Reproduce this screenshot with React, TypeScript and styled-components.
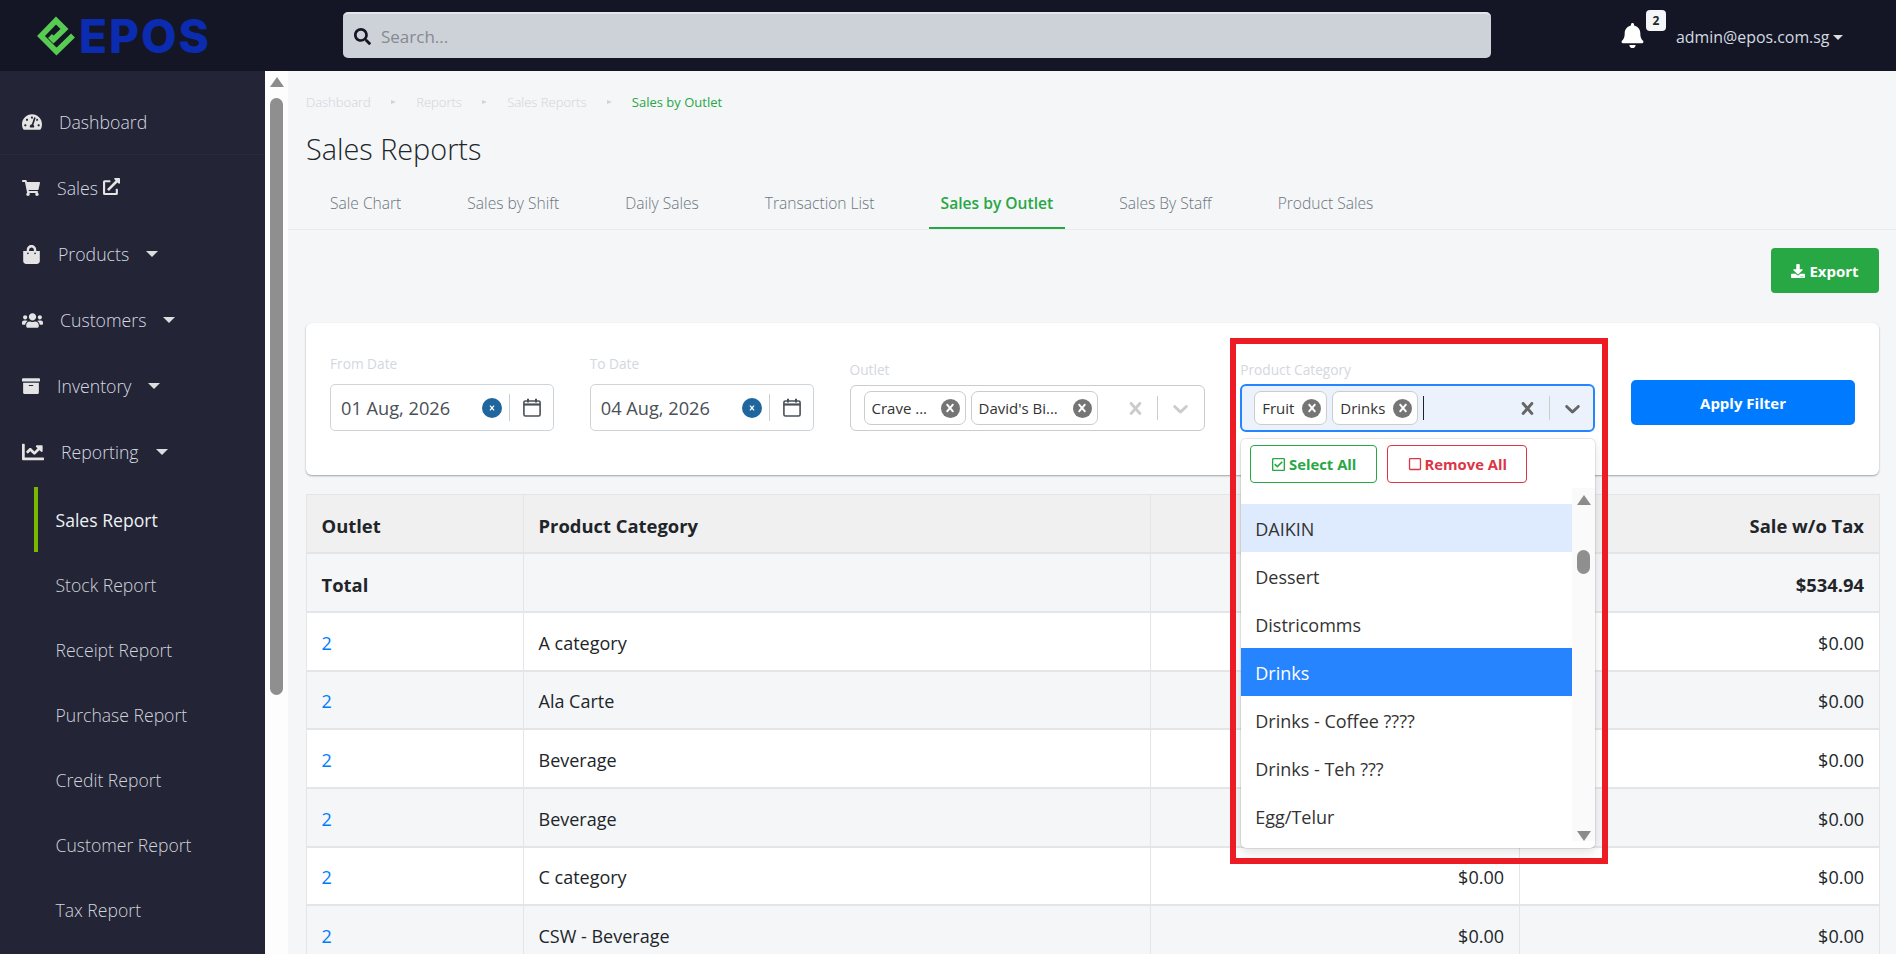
import React from 'react';
import styled, {createGlobalStyle} from 'styled-components';
import {
  FaArchive, FaBell, FaChartLine, FaDownload, FaExternalLinkAlt, FaRegCheckSquare, FaRegSquare,
  FaSearch, FaShoppingBag, FaShoppingCart, FaTachometerAlt, FaUsers
} from 'react-icons/fa';

const GlobalStyle = createGlobalStyle`
  html, body {
    margin: 0;
    height: 100%;
    overflow: hidden;
    font-family: "Open Sans", "Noto Sans", "Liberation Sans", sans-serif;
    color: #212529;
  }
  * {
    box-sizing: border-box;
  }
`;

const Page = styled.div`
  height: 954px;
  display: flex;
  flex-direction: column;
  overflow: hidden;
  background: #f4f6f8;
`;

const Header = styled.header`
  height: 71px;
  flex: none;
  background: #151625;
  display: flex;
  align-items: center;
`;

const Brand = styled.div`
  width: 343px;
  padding-left: 37px;
  display: flex;
  align-items: center;
  gap: 2px;
`;

const BrandName = styled.span`
  font-family: Inter, "Liberation Sans", sans-serif;
  font-size: 46px;
  font-weight: 800;
  line-height: 1;
  letter-spacing: 2px;
  color: #0b2bb0;
`;

const SearchBar = styled.div`
  width: 1148px;
  height: 46px;
  margin-top: -1px;
  background: #cdd1d8;
  border-top: 2px solid #e4e6ea;
  border-radius: 5px;
  padding-left: 11px;
  display: flex;
  align-items: center;
  gap: 10px;
  font-size: 17px;
  color: #858a92;
  svg {
    color: #151625;
    font-size: 17px;
  }
`;

const Actions = styled.div`
  margin-left: 129px;
  display: flex;
  align-items: center;
`;

const BellWrap = styled.div`
  position: relative;
  width: 23px;
  height: 26px;
  color: #fff;
  font-size: 25px;
  line-height: 0;
`;

const Badge = styled.span`
  position: absolute;
  left: 26px;
  top: -13px;
  width: 20px;
  height: 21px;
  border-radius: 4px;
  background: #f4f6f8;
  color: #212529;
  font-size: 12px;
  font-weight: 700;
  line-height: 21px;
  text-align: center;
`;

const UserMenu = styled.div`
  margin: 3px 0 0 33px;
  font-size: 15.9px;
  color: #d3dbe2;
  display: flex;
  align-items: center;
  gap: 4px;
`;

const Caret = styled.i<{$small?: boolean}>`
  display: inline-block;
  width: 0;
  height: 0;
  border-left: ${p => (p.$small ? 5 : 6)}px solid transparent;
  border-right: ${p => (p.$small ? 5 : 6)}px solid transparent;
  border-top: ${p => (p.$small ? 5 : 6)}px solid #ddd;
`;

const Body = styled.div`
  flex: 1;
  display: flex;
  min-height: 0;
`;

const Sidebar = styled.nav`
  width: 265px;
  flex: none;
  background: #232436;
  padding-top: 18px;
  overflow: hidden;
`;

const NavItem = styled.div<{$first?: boolean}>`
  height: 66px;
  padding-left: 22px;
  display: flex;
  align-items: center;
  gap: 17px;
  font-size: 17.7px;
  font-weight: 300;
  color: #d5dae0;
  border-bottom: ${p => (p.$first ? '1px solid #2a2b3e' : 'none')};
  svg {
    color: #e4e4e4;
    flex: none;
  }
`;

const SubMenu = styled.div`
  padding-top: 2px;
`;

const SubItem = styled.div<{$active?: boolean}>`
  height: 65px;
  margin-left: 34px;
  padding-left: 17.5px;
  display: flex;
  align-items: center;
  font-size: 17.6px;
  font-weight: ${p => (p.$active ? 400 : 300)};
  color: ${p => (p.$active ? '#eef1f4' : '#d0d5db')};
  border-left: 4px solid ${p => (p.$active ? '#7ab800' : 'transparent')};
`;

const ScrollTrack = styled.div`
  width: 23px;
  flex: none;
  background: #fdfdfd;
  display: flex;
  flex-direction: column;
  align-items: center;
  padding-top: 6px;
`;

const ArrowUp = styled.i`
  width: 0;
  height: 0;
  border-left: 7.5px solid transparent;
  border-right: 7.5px solid transparent;
  border-bottom: 10px solid #8c8c8c;
`;

const ArrowDown = styled.i`
  width: 0;
  height: 0;
  border-left: 7.5px solid transparent;
  border-right: 7.5px solid transparent;
  border-top: 10px solid #8c8c8c;
`;

const ScrollThumb = styled.div`
  width: 13px;
  height: 597px;
  margin-top: 11px;
  border-radius: 7px;
  background: #8f8f8f;
`;

const Main = styled.main`
  flex: 1;
  min-width: 0;
  overflow: hidden;
`;

const Breadcrumbs = styled.div`
  margin: 21px 0 0 18px;
  height: 20px;
  display: flex;
  align-items: center;
  font-size: 13px;
`;

const Crumb = styled.span<{$active?: boolean}>`
  color: ${p => (p.$active ? '#28a745' : '#d0d4da')};
  font-weight: ${p => (p.$active ? 400 : 300)};
`;

const CrumbSep = styled.i`
  width: 0;
  height: 0;
  margin: 0 20.2px;
  border-left: 5px solid #d0d4da;
  border-top: 2px solid transparent;
  border-bottom: 2px solid transparent;
`;

const Title = styled.h1`
  margin: 17px 0 0 18px;
  font-size: 28.8px;
  line-height: 40px;
  font-weight: 300;
  color: #212529;
`;

const Tabs = styled.div`
  margin-top: 8px;
  height: 53px;
  padding-left: 30px;
  display: flex;
  gap: 42px;
  border-bottom: 1px solid #e9ecef;
`;

const Tab = styled.div<{$active?: boolean}>`
  padding: 2px 12px 0;
  display: flex;
  align-items: center;
  font-size: 15.6px;
  font-weight: ${p => (p.$active ? 600 : 300)};
  color: ${p => (p.$active ? '#28a745' : '#6c757d')};
  border-bottom: 2px solid ${p => (p.$active ? '#28a745' : 'transparent')};
`;

const Content = styled.div`
  padding: 18px 17px 0 18px;
`;

const ExportRow = styled.div`
  display: flex;
  justify-content: flex-end;
`;

const ExportButton = styled.button`
  width: 108px;
  height: 45px;
  border: 0;
  border-radius: 4px;
  background: #28a745;
  color: #fff;
  font: 700 15px "Open Sans", sans-serif;
  display: flex;
  align-items: center;
  justify-content: center;
  gap: 4px;
`;

const FilterCard = styled.section`
  margin-top: 30px;
  height: 152px;
  padding: 0 24px 43px;
  background: #fff;
  border-radius: 6px;
  box-shadow: 0 1px 2px rgba(0, 0, 0, 0.35);
  display: flex;
  align-items: flex-end;
  gap: 35.75px;
`;

const Field = styled.div<{$width: number}>`
  width: ${p => p.$width}px;
  flex: none;
`;

const FieldLabel = styled.div<{$gap: number}>`
  font-size: 13.7px;
  line-height: 16px;
  color: #d3d7de;
  margin-bottom: ${p => p.$gap}px;
`;

const DateBox = styled.div`
  height: 47px;
  margin-bottom: 1px;
  padding: 0 12px 0 10px;
  border: 1px solid #ced4da;
  border-radius: 5px;
  display: flex;
  align-items: center;
  font-size: 18.2px;
  color: #495057;
  > span {
    flex: 1;
    padding-top: 1px;
  }
`;

const DateClear = styled.i`
  width: 20px;
  height: 20px;
  border-radius: 50%;
  background: #1f669f;
  color: #fff;
  display: flex;
  align-items: center;
  justify-content: center;
  svg {
    width: 10px;
    height: 10px;
  }
`;

const DateSep = styled.i`
  width: 1px;
  height: 27px;
  margin: 0 13px 0 7px;
  background: #ccc;
`;

const SelectAnchor = styled.div`
  position: relative;
`;

const SelectBox = styled.div<{$focused?: boolean}>`
  height: ${p => (p.$focused ? 48 : 46)}px;
  margin-bottom: ${p => (p.$focused ? 0 : 1)}px;
  padding-left: ${p => (p.$focused ? 12 : 13)}px;
  border: ${p => (p.$focused ? '2px solid #2684ff' : '1px solid #ccc')};
  border-radius: 6px;
  background: ${p => (p.$focused ? '#ebf2fb' : '#fff')};
  display: flex;
  align-items: center;
`;

const Chip = styled.div<{$width: number}>`
  width: ${p => p.$width}px;
  height: 34px;
  margin-right: 5px;
  padding: 0 5px 0 7px;
  border: 1px solid #ccc;
  border-radius: 7px;
  background: #fff;
  display: flex;
  align-items: center;
  justify-content: space-between;
  font-size: 15px;
  color: #333;
`;

const ChipClose = styled.i`
  width: 19px;
  height: 19px;
  border-radius: 50%;
  background: #757575;
  color: #fff;
  display: flex;
  align-items: center;
  justify-content: center;
  flex: none;
  svg {
    width: 16px;
    height: 16px;
  }
`;

const TextCursor = styled.i`
  width: 1px;
  height: 24px;
  background: #222;
`;

const SelectTools = styled.div<{$muted?: boolean}>`
  margin-left: auto;
  padding-right: ${p => (p.$muted ? 10.5 : 8.5)}px;
  display: flex;
  align-items: center;
  color: ${p => (p.$muted ? '#ccc' : '#666')};
  svg {
    width: 25px;
    height: 25px;
    fill: currentColor;
    flex: none;
  }
`;

const ToolSep = styled.i`
  width: 1px;
  height: 24px;
  margin: 0 10px 0 9px;
  background: #ccc;
`;

const Menu = styled.div`
  position: absolute;
  z-index: 3;
  top: 55px;
  left: 1px;
  width: 354px;
  height: 409px;
  background: #fff;
  border-radius: 5px;
  box-shadow: 0 0 0 1px rgba(0, 0, 0, 0.08), 0 4px 11px rgba(0, 0, 0, 0.12);
  overflow: hidden;
`;

const MenuActions = styled.div`
  height: 49px;
  padding: 6px 0 0 9px;
  display: flex;
  gap: 10px;
`;

const MenuButton = styled.button<{$color: string; $width: number}>`
  width: ${p => p.$width}px;
  height: 38px;
  border: 1px solid ${p => p.$color};
  border-radius: 4px;
  background: #fff;
  color: ${p => p.$color};
  font: 700 14.8px "Open Sans", sans-serif;
  display: flex;
  align-items: center;
  justify-content: center;
  gap: 3px;
  padding: 0;
`;

const MenuList = styled.div`
  height: 360px;
  display: flex;
`;

const Options = styled.div`
  flex: 1;
  padding-top: 16px;
`;

const Option = styled.div<{$state?: 'hover' | 'selected'}>`
  height: 48px;
  padding: 1px 0 0 14px;
  display: flex;
  align-items: center;
  font-size: 18px;
  color: ${p => (p.$state === 'selected' ? '#fff' : '#333')};
  background: ${p => (p.$state === 'selected' ? '#2684ff' : p.$state === 'hover' ? '#deebff' : 'transparent')};
`;

const MenuTrack = styled(ScrollTrack)`
  background: #fafafa;
  padding-top: 7px;
  height: 353px;
`;

const MenuThumb = styled.div`
  width: 13px;
  height: 25px;
  margin: 45px 0 257px;
  border-radius: 7px;
  background: #8f8f8f;
`;

const Annotation = styled.div`
  position: absolute;
  z-index: 4;
  left: -10px;
  top: -46px;
  width: 378px;
  height: 526px;
  border: 6px solid #ed1c24;
  pointer-events: none;
`;

const ApplyButton = styled.button`
  width: 224px;
  height: 45px;
  margin-bottom: 7px;
  flex: none;
  border: 0;
  border-radius: 5px;
  background: #007bff;
  color: #fff;
  font: 700 15px "Open Sans", sans-serif;
`;

const Table = styled.table`
  width: 1573px;
  margin-top: 19px;
  table-layout: fixed;
  border-collapse: collapse;
  font-size: 18px;

  th, td {
    height: 58.7px;
    padding: 3px 15px 0 14.5px;
    border: 1px solid #e3e5e8;
    border-bottom-width: 2px;
    text-align: left;
  }
  th {
    background: #f0f0f0;
    font-size: 18.4px;
    font-weight: 700;
  }
  b {
    font-size: 18.4px;
  }
  .amount {
    text-align: right;
  }
  tbody tr:nth-child(even) td {
    background: #fff;
  }
  tbody tr:nth-child(odd) td {
    background: #f4f6f8;
  }
`;

const OutletLink = styled.span`
  color: #007bff;
`;

const CloseGlyph = () => (
  <svg viewBox="0 0 20 20" fill="currentColor">
    <path d="M14.348 14.849c-0.469 0.469-1.229 0.469-1.697 0l-2.651-3.030-2.651 3.029c-0.469 0.469-1.229 0.469-1.697 0-0.469-0.469-0.469-1.229 0-1.697l2.758-3.15-2.759-3.152c-0.469-0.469-0.469-1.228 0-1.697s1.228-0.469 1.697 0l2.652 3.031 2.651-3.031c0.469-0.469 1.228-0.469 1.697 0s0.469 1.229 0 1.697l-2.758 3.152 2.758 3.15c0.469 0.469 0.469 1.229 0 1.698z"/>
  </svg>
);

const ChevronGlyph = () => (
  <svg viewBox="0 0 20 20">
    <path d="M4.516 7.548c0.436-0.446 1.043-0.481 1.576 0l3.908 3.747 3.908-3.747c0.533-0.481 1.141-0.446 1.574 0 0.436 0.445 0.408 1.197 0 1.615-0.406 0.418-4.695 4.502-4.695 4.502-0.217 0.223-0.502 0.335-0.787 0.335s-0.57-0.112-0.789-0.335c0 0-4.287-4.084-4.695-4.502s-0.436-1.17 0-1.615z"/>
  </svg>
);

const CalendarGlyph = () => (
  <svg width="18" height="19" viewBox="0 0 18 19" fill="none" stroke="#495057">
    <rect x="0.9" y="3" width="16.2" height="15" rx="1.5" strokeWidth="1.6"/>
    <path d="M1 6.5h16" strokeWidth="2.2"/>
    <path d="M5 0.8v3.6M13 0.8v3.6" strokeWidth="2"/>
  </svg>
);

const LogoMark = () => (
  <svg width="40" height="40" viewBox="0 0 40 40" fill="none" stroke="#58cc52" strokeWidth="5.6" strokeLinejoin="miter">
    <path d="M36 19.5 19.5 35.5 4 20 19 4.5 27.5 13 16.5 23.5 13 20"/>
  </svg>
);

const tabs = ['Sale Chart', 'Sales by Shift', 'Daily Sales', 'Transaction List', 'Sales by Outlet', 'Sales By Staff', 'Product Sales'];
const subMenu = ['Sales Report', 'Stock Report', 'Receipt Report', 'Purchase Report', 'Credit Report', 'Customer Report', 'Tax Report'];
const categories = ['A category', 'Ala Carte', 'Beverage', 'Beverage', 'C category', 'CSW - Beverage'];
const options = ['DAIKIN', 'Dessert', 'Districomms', 'Drinks', 'Drinks - Coffee ????', 'Drinks - Teh ???', 'Egg/Telur'];

function DateField(props: {label: string; value: string}) {
  return (
    <Field $width={224}>
      <FieldLabel $gap={12}>{props.label}</FieldLabel>
      <DateBox>
        <span>{props.value}</span>
        <DateClear><CloseGlyph/></DateClear>
        <DateSep/>
        <CalendarGlyph/>
      </DateBox>
    </Field>
  );
}

function SelectChip(props: {label: string; width: number}) {
  return (
    <Chip $width={props.width}>
      {props.label}
      <ChipClose><CloseGlyph/></ChipClose>
    </Chip>
  );
}

function App() {
  return (
    <Page>
      <GlobalStyle/>
      <Header>
        <Brand>
          <LogoMark/>
          <BrandName>EPOS</BrandName>
        </Brand>
        <SearchBar>
          <FaSearch/>
          Search...
        </SearchBar>
        <Actions>
          <BellWrap>
            <FaBell/>
            <Badge>2</Badge>
          </BellWrap>
          <UserMenu>
            admin@epos.com.sg
            <Caret $small/>
          </UserMenu>
        </Actions>
      </Header>
      <Body>
        <Sidebar>
          <NavItem $first><FaTachometerAlt size={20}/>Dashboard</NavItem>
          <NavItem><FaShoppingCart size={18}/><span>Sales <FaExternalLinkAlt size={17}/></span></NavItem>
          <NavItem><FaShoppingBag size={19}/>Products<Caret/></NavItem>
          <NavItem><FaUsers size={21}/>Customers<Caret/></NavItem>
          <NavItem><FaArchive size={18}/>Inventory<Caret/></NavItem>
          <NavItem><FaChartLine size={22}/>Reporting<Caret/></NavItem>
          <SubMenu>
            {subMenu.map((name, i) =>
              <SubItem key={name} $active={i === 0}>{name}</SubItem>
            )}
          </SubMenu>
        </Sidebar>
        <ScrollTrack>
          <ArrowUp/>
          <ScrollThumb/>
        </ScrollTrack>
        <Main>
          <Breadcrumbs>
            <Crumb>Dashboard</Crumb><CrumbSep/>
            <Crumb>Reports</Crumb><CrumbSep/>
            <Crumb>Sales Reports</Crumb><CrumbSep/>
            <Crumb $active>Sales by Outlet</Crumb>
          </Breadcrumbs>
          <Title>Sales Reports</Title>
          <Tabs>
            {tabs.map(tab =>
              <Tab key={tab} $active={tab === 'Sales by Outlet'}>{tab}</Tab>
            )}
          </Tabs>
          <Content>
            <ExportRow>
              <ExportButton><FaDownload size={14}/>Export</ExportButton>
            </ExportRow>
            <FilterCard>
              <DateField label="From Date" value="01 Aug, 2026"/>
              <DateField label="To Date" value="04 Aug, 2026"/>
              <Field $width={355}>
                <FieldLabel $gap={7}>Outlet</FieldLabel>
                <SelectBox>
                  <SelectChip label="Crave ..." width={102}/>
                  <SelectChip label="David's Bi..." width={127}/>
                  <SelectTools $muted>
                    <CloseGlyph/>
                    <ToolSep/>
                    <ChevronGlyph/>
                  </SelectTools>
                </SelectBox>
              </Field>
              <Field $width={355}>
                <FieldLabel $gap={6}>Product Category</FieldLabel>
                <SelectAnchor>
                  <SelectBox $focused>
                    <SelectChip label="Fruit" width={73}/>
                    <SelectChip label="Drinks" width={86}/>
                    <TextCursor/>
                    <SelectTools>
                      <CloseGlyph/>
                      <ToolSep/>
                      <ChevronGlyph/>
                    </SelectTools>
                  </SelectBox>
                  <Menu>
                    <MenuActions>
                      <MenuButton $color="#28a745" $width={127}><FaRegCheckSquare size={15}/>Select All</MenuButton>
                      <MenuButton $color="#dc3545" $width={140}><FaRegSquare size={14}/>Remove All</MenuButton>
                    </MenuActions>
                    <MenuList>
                      <Options>
                        {options.map(name =>
                          <Option key={name} $state={name === 'DAIKIN' ? 'hover' : name === 'Drinks' ? 'selected' : undefined}>{name}</Option>
                        )}
                      </Options>
                      <MenuTrack>
                        <ArrowUp/>
                        <MenuThumb/>
                        <ArrowDown/>
                      </MenuTrack>
                    </MenuList>
                  </Menu>
                  <Annotation/>
                </SelectAnchor>
              </Field>
              <ApplyButton>Apply Filter</ApplyButton>
            </FilterCard>
            <Table>
              <colgroup>
                <col width="217"/>
                <col width="627"/>
                <col width="369"/>
                <col width="360"/>
              </colgroup>
              <thead>
                <tr>
                  <th>Outlet</th>
                  <th>Product Category</th>
                  <th className="amount"></th>
                  <th className="amount">Sale w/o Tax</th>
                </tr>
              </thead>
              <tbody>
                <tr>
                  <td><b>Total</b></td>
                  <td></td>
                  <td className="amount"></td>
                  <td className="amount"><b>$534.94</b></td>
                </tr>
                {categories.map((name, i) =>
                  <tr key={i}>
                    <td><OutletLink>2</OutletLink></td>
                    <td>{name}</td>
                    <td className="amount">$0.00</td>
                    <td className="amount">$0.00</td>
                  </tr>
                )}
              </tbody>
            </Table>
          </Content>
        </Main>
      </Body>
    </Page>
  );
}

export default App;
